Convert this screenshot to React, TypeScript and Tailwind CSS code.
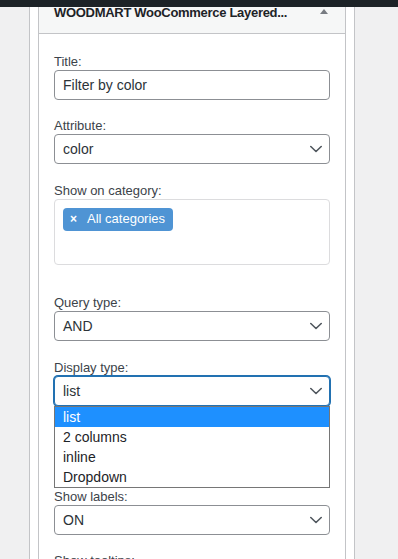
import React from "react";

function Chevron() {
  return (
    <svg width="12" height="8" viewBox="0 0 12 8" className="shrink-0">
      <path d="M0.8 1.5 L6 6.5 L11.2 1.5" stroke="#50575e" strokeWidth="1.6" fill="none" strokeLinecap="round" strokeLinejoin="round" />
    </svg>
  );
}

function Label({ children }: { children: React.ReactNode }) {
  return <div className="h-[18px] leading-[20px] text-[13px] text-[#3c434a] whitespace-nowrap">{children}</div>;
}

function Select({ value, focused }: { value: string; focused?: boolean }) {
  return (
    <div
      className={
        focused
          ? "h-[30px] rounded-[4px] border border-[#2271b1] shadow-[0_0_0_1px_#2271b1] flex items-center justify-between pl-[8px] pr-[7px] bg-white"
          : "h-[30px] rounded-[4px] border border-[#8c8f94] flex items-center justify-between pl-[8px] pr-[7px] bg-white"
      }
    >
      <span className="text-[14px] text-[#2c3338] leading-[20px]">{value}</span>
      <Chevron />
    </div>
  );
}

export default function App() {
  return (
    <div className="w-[398px] h-[559px] overflow-hidden bg-[#f0f0f1] font-['Liberation_Sans',Arial,sans-serif] flex flex-col">
      <div className="h-[7px] shrink-0 bg-[#1d2327]" />
      <div className="ml-[29px] w-[326px] flex-1 bg-white border-x border-[#c3c4c7] px-[8px]">
        <div className="border-x border-[#c3c4c7] h-full bg-white">
          {/* header */}
          <div className="h-[27px] bg-[#f6f7f7] border-b border-[#c3c4c7] overflow-hidden flex items-start justify-between pl-[15px] pr-[17px]">
            <span className="-mt-[4px] leading-[20px] text-[13px] font-bold tracking-[-0.3px] text-[#1d2327] whitespace-nowrap">
              WOODMART WooCommerce Layered...
            </span>
            <svg width="8" height="5" viewBox="0 0 8 5" className="mt-[2px]">
              <path d="M0 5 L4 0 L8 5 Z" fill="#787c82" />
            </svg>
          </div>
          {/* body */}
          <div className="px-[15px] pt-[18px]">
            <Label>Title:</Label>
            <div className="h-[30px] rounded-[4px] border border-[#8c8f94] flex items-center pl-[8px]">
              <span className="text-[14px] text-[#2c3338]">Filter by color</span>
            </div>

            <div className="mt-[16px]">
              <Label>Attribute:</Label>
              <Select value="color" />
            </div>

            <div className="mt-[17px]">
              <Label>Show on category:</Label>
              <div className="h-[66px] rounded-[4px] border border-[#dcdcde] pt-[6px] pl-[8px]">
                <div className="inline-flex items-center h-[23px] rounded-[4px] bg-[#4f94d4] pl-[7px] pr-[8px] text-white text-[13px]">
                  <span className="text-[12px] font-bold mr-[10px] leading-none">×</span>
                  <span>All categories</span>
                </div>
              </div>
            </div>

            <div className="mt-[28px]">
              <Label>Query type:</Label>
              <Select value="AND" />
            </div>

            <div className="mt-[17px]">
              <Label>Display type:</Label>
              <div className="relative">
                <Select value="list" focused />
                <div className="absolute left-0 right-0 top-[30px] z-10 bg-white border border-[#767676] flex flex-col">
                  <div className="h-[20px] leading-[20px] pl-[8px] bg-[#1e90ff] text-white text-[14px]">list</div>
                  <div className="h-[20px] leading-[20px] pl-[8px] text-[#1d2327] text-[14px]">2 columns</div>
                  <div className="h-[20px] leading-[20px] pl-[8px] text-[#1d2327] text-[14px]">inline</div>
                  <div className="h-[20px] leading-[20px] pl-[8px] text-[#1d2327] text-[14px]">Dropdown</div>
                </div>
              </div>
            </div>

            <div className="mt-[16px] invisible">
              <Label>Swatches size:</Label>
              <Select value="Normal" />
            </div>

            <div className="mt-[17px]">
              <Label>Show labels:</Label>
              <Select value="ON" />
            </div>

            <div className="mt-[16px]">
              <Label>Show tooltips:</Label>
              <Select value="ON" />
            </div>
          </div>
        </div>
      </div>
    </div>
  );
}
